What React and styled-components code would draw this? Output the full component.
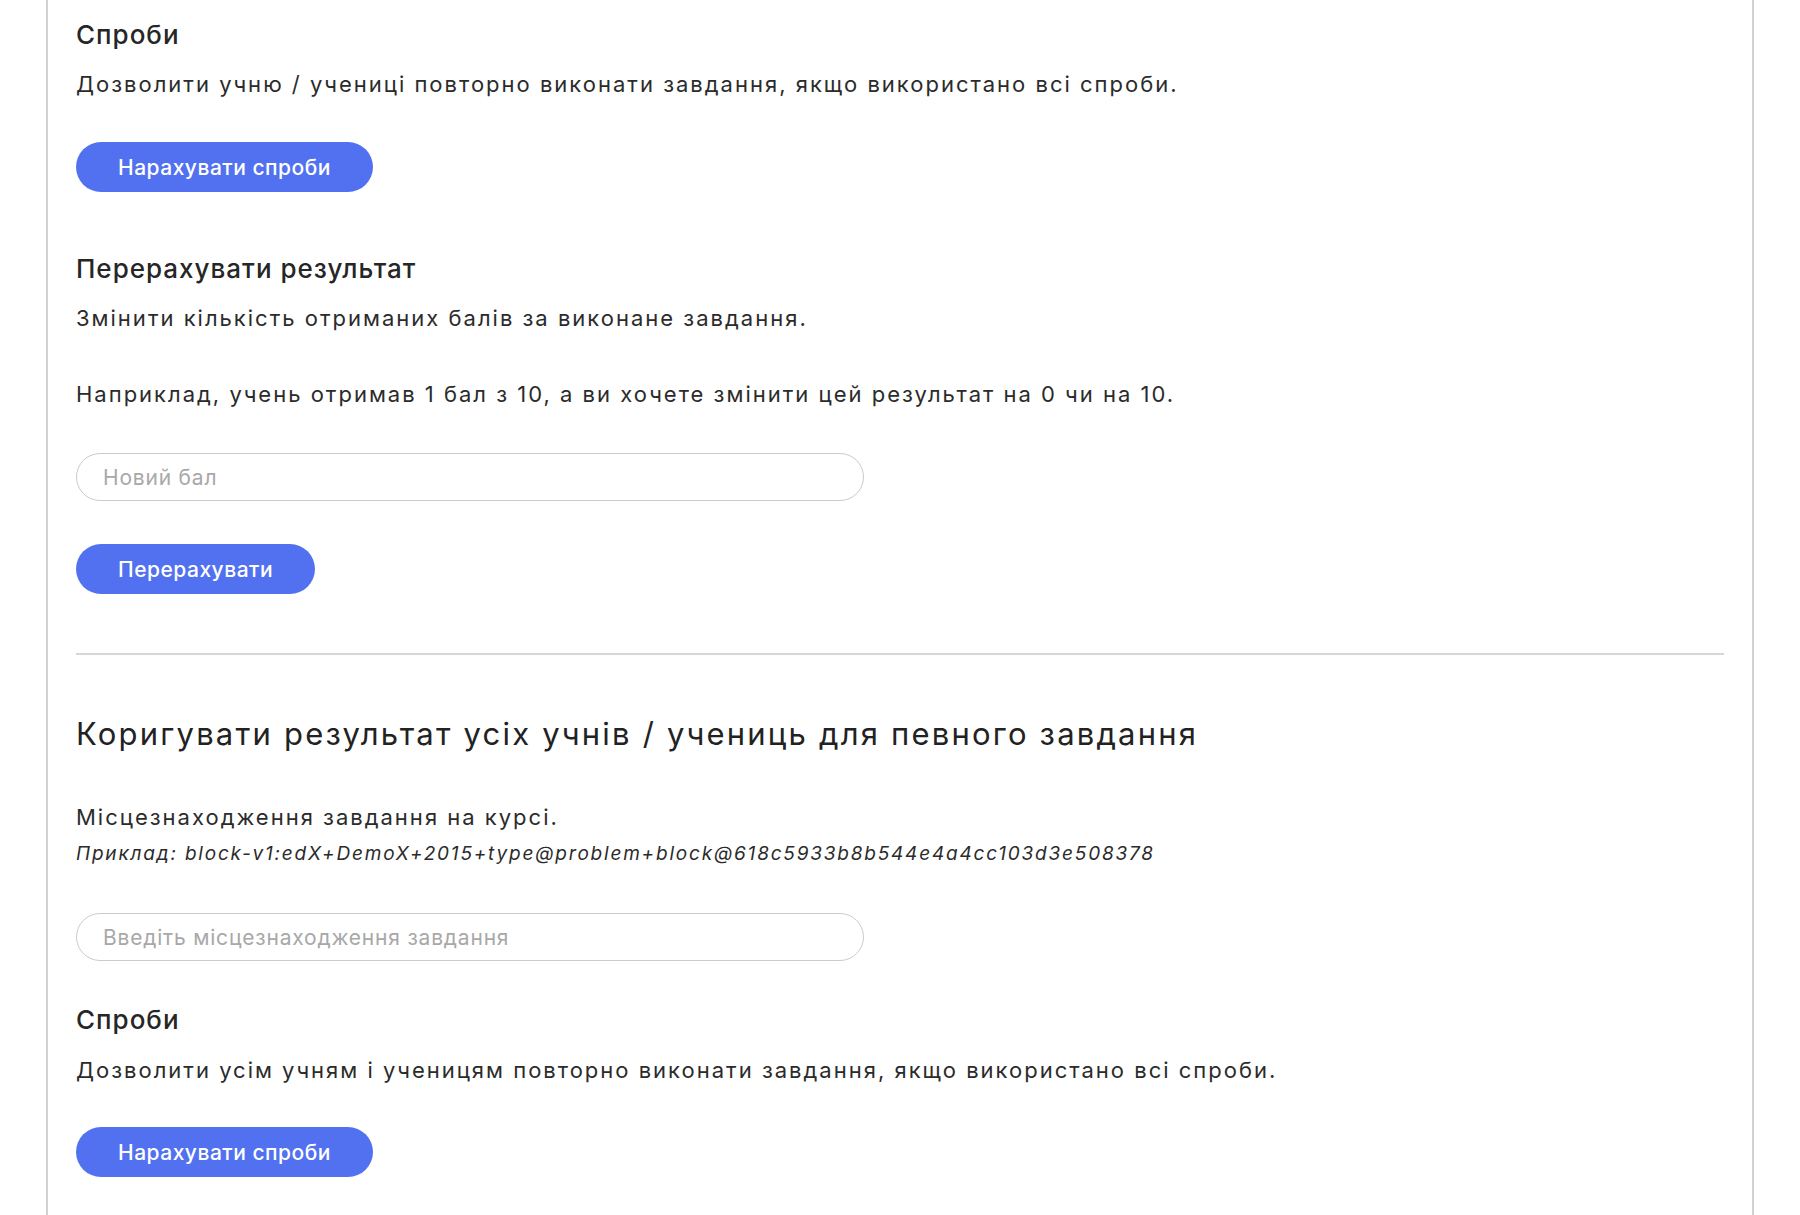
import React from "react";
import styled, { createGlobalStyle } from "styled-components";

const GlobalStyle = createGlobalStyle`
  html, body {
    margin: 0;
    padding: 0;
    background: #ffffff;
  }
  body {
    font-family: Inter, "Noto Sans", "Liberation Sans", sans-serif;
    color: #2b2b2b;
  }
  * { box-sizing: border-box; }
`;

const Page = styled.div`
  padding: 0 46px;
  min-height: 1215px;
`;

const Frame = styled.main`
  border-left: 2px solid #d2d2d2;
  border-right: 2px solid #d2d2d2;
  padding: 19px 28px 40px;
  min-height: 1215px;
  display: flex;
  flex-direction: column;
  align-items: flex-start;
`;

const Heading = styled.h3`
  margin: ${(p) => p.$top || 0}px 0 0;
  font-size: 26px;
  line-height: 32px;
  font-weight: 500;
  letter-spacing: 1px;
  color: #262626;
`;

const Title = styled.h2`
  margin: ${(p) => p.$top || 0}px 0 0;
  font-size: 31px;
  line-height: 40px;
  font-weight: 400;
  letter-spacing: 2.2px;
  color: #222222;
`;

const Text = styled.p`
  margin: ${(p) => p.$top || 0}px 0 0;
  font-size: 22px;
  line-height: 32px;
  font-weight: 400;
  letter-spacing: 2px;
  color: #2b2b2b;
`;

const Example = styled.p`
  margin: ${(p) => p.$top || 0}px 0 0;
  font-size: 19px;
  line-height: 28px;
  font-style: italic;
  letter-spacing: 1.8px;
  color: #2b2b2b;
`;

const PillButton = styled.button`
  margin-top: ${(p) => p.$top || 0}px;
  height: 50px;
  padding: 0 42px;
  border: none;
  border-radius: 25px;
  background: #5271f0;
  color: #ffffff;
  font-family: inherit;
  font-size: 21px;
  font-weight: 500;
  letter-spacing: 0.5px;
  cursor: pointer;
`;

const PillInput = styled.input`
  margin-top: ${(p) => p.$top || 0}px;
  width: 788px;
  height: 48px;
  padding: 0 26px;
  border: 1.5px solid #cbcbcb;
  border-radius: 24px;
  background: #ffffff;
  font-family: inherit;
  font-size: 21px;
  letter-spacing: 0.8px;
  color: #2b2b2b;
  outline: none;
  &::placeholder {
    color: #a8a8a8;
  }
`;

const Divider = styled.hr`
  align-self: stretch;
  margin: ${(p) => p.$top || 0}px 0 0;
  border: none;
  border-top: 2px solid #d6d6d6;
  height: 0;
`;

export default function App() {
  return (
    <>
      <GlobalStyle />
      <Page>
        <Frame>
          <Heading>Спроби</Heading>
          <Text $top={17}>
            Дозволити учню / учениці повторно виконати завдання, якщо використано всі спроби.
          </Text>
          <PillButton $top={42}>Нарахувати спроби</PillButton>

          <Heading $top={61}>Перерахувати результат</Heading>
          <Text $top={17}>Змінити кількість отриманих балів за виконане завдання.</Text>
          <Text $top={44}>
            Наприклад, учень отримав 1 бал з 10, а ви хочете змінити цей результат на 0 чи на 10.
          </Text>
          <PillInput $top={43} type="text" placeholder="Новий бал" />
          <PillButton $top={43}>Перерахувати</PillButton>

          <Divider $top={59} />

          <Title $top={59}>Коригувати результат усіх учнів / учениць для певного завдання</Title>
          <Text $top={47}>Місцезнаходження завдання на курсі.</Text>
          <Example $top={7}>
            Приклад: block-v1:edX+DemoX+2015+type@problem+block@618c5933b8b544e4a4cc103d3e508378
          </Example>
          <PillInput $top={45} type="text" placeholder="Введіть місцезнаходження завдання" />

          <Heading $top={43}>Спроби</Heading>
          <Text $top={18}>
            Дозволити усім учням і ученицям повторно виконати завдання, якщо використано всі спроби.
          </Text>
          <PillButton $top={41}>Нарахувати спроби</PillButton>
        </Frame>
      </Page>
    </>
  );
}
